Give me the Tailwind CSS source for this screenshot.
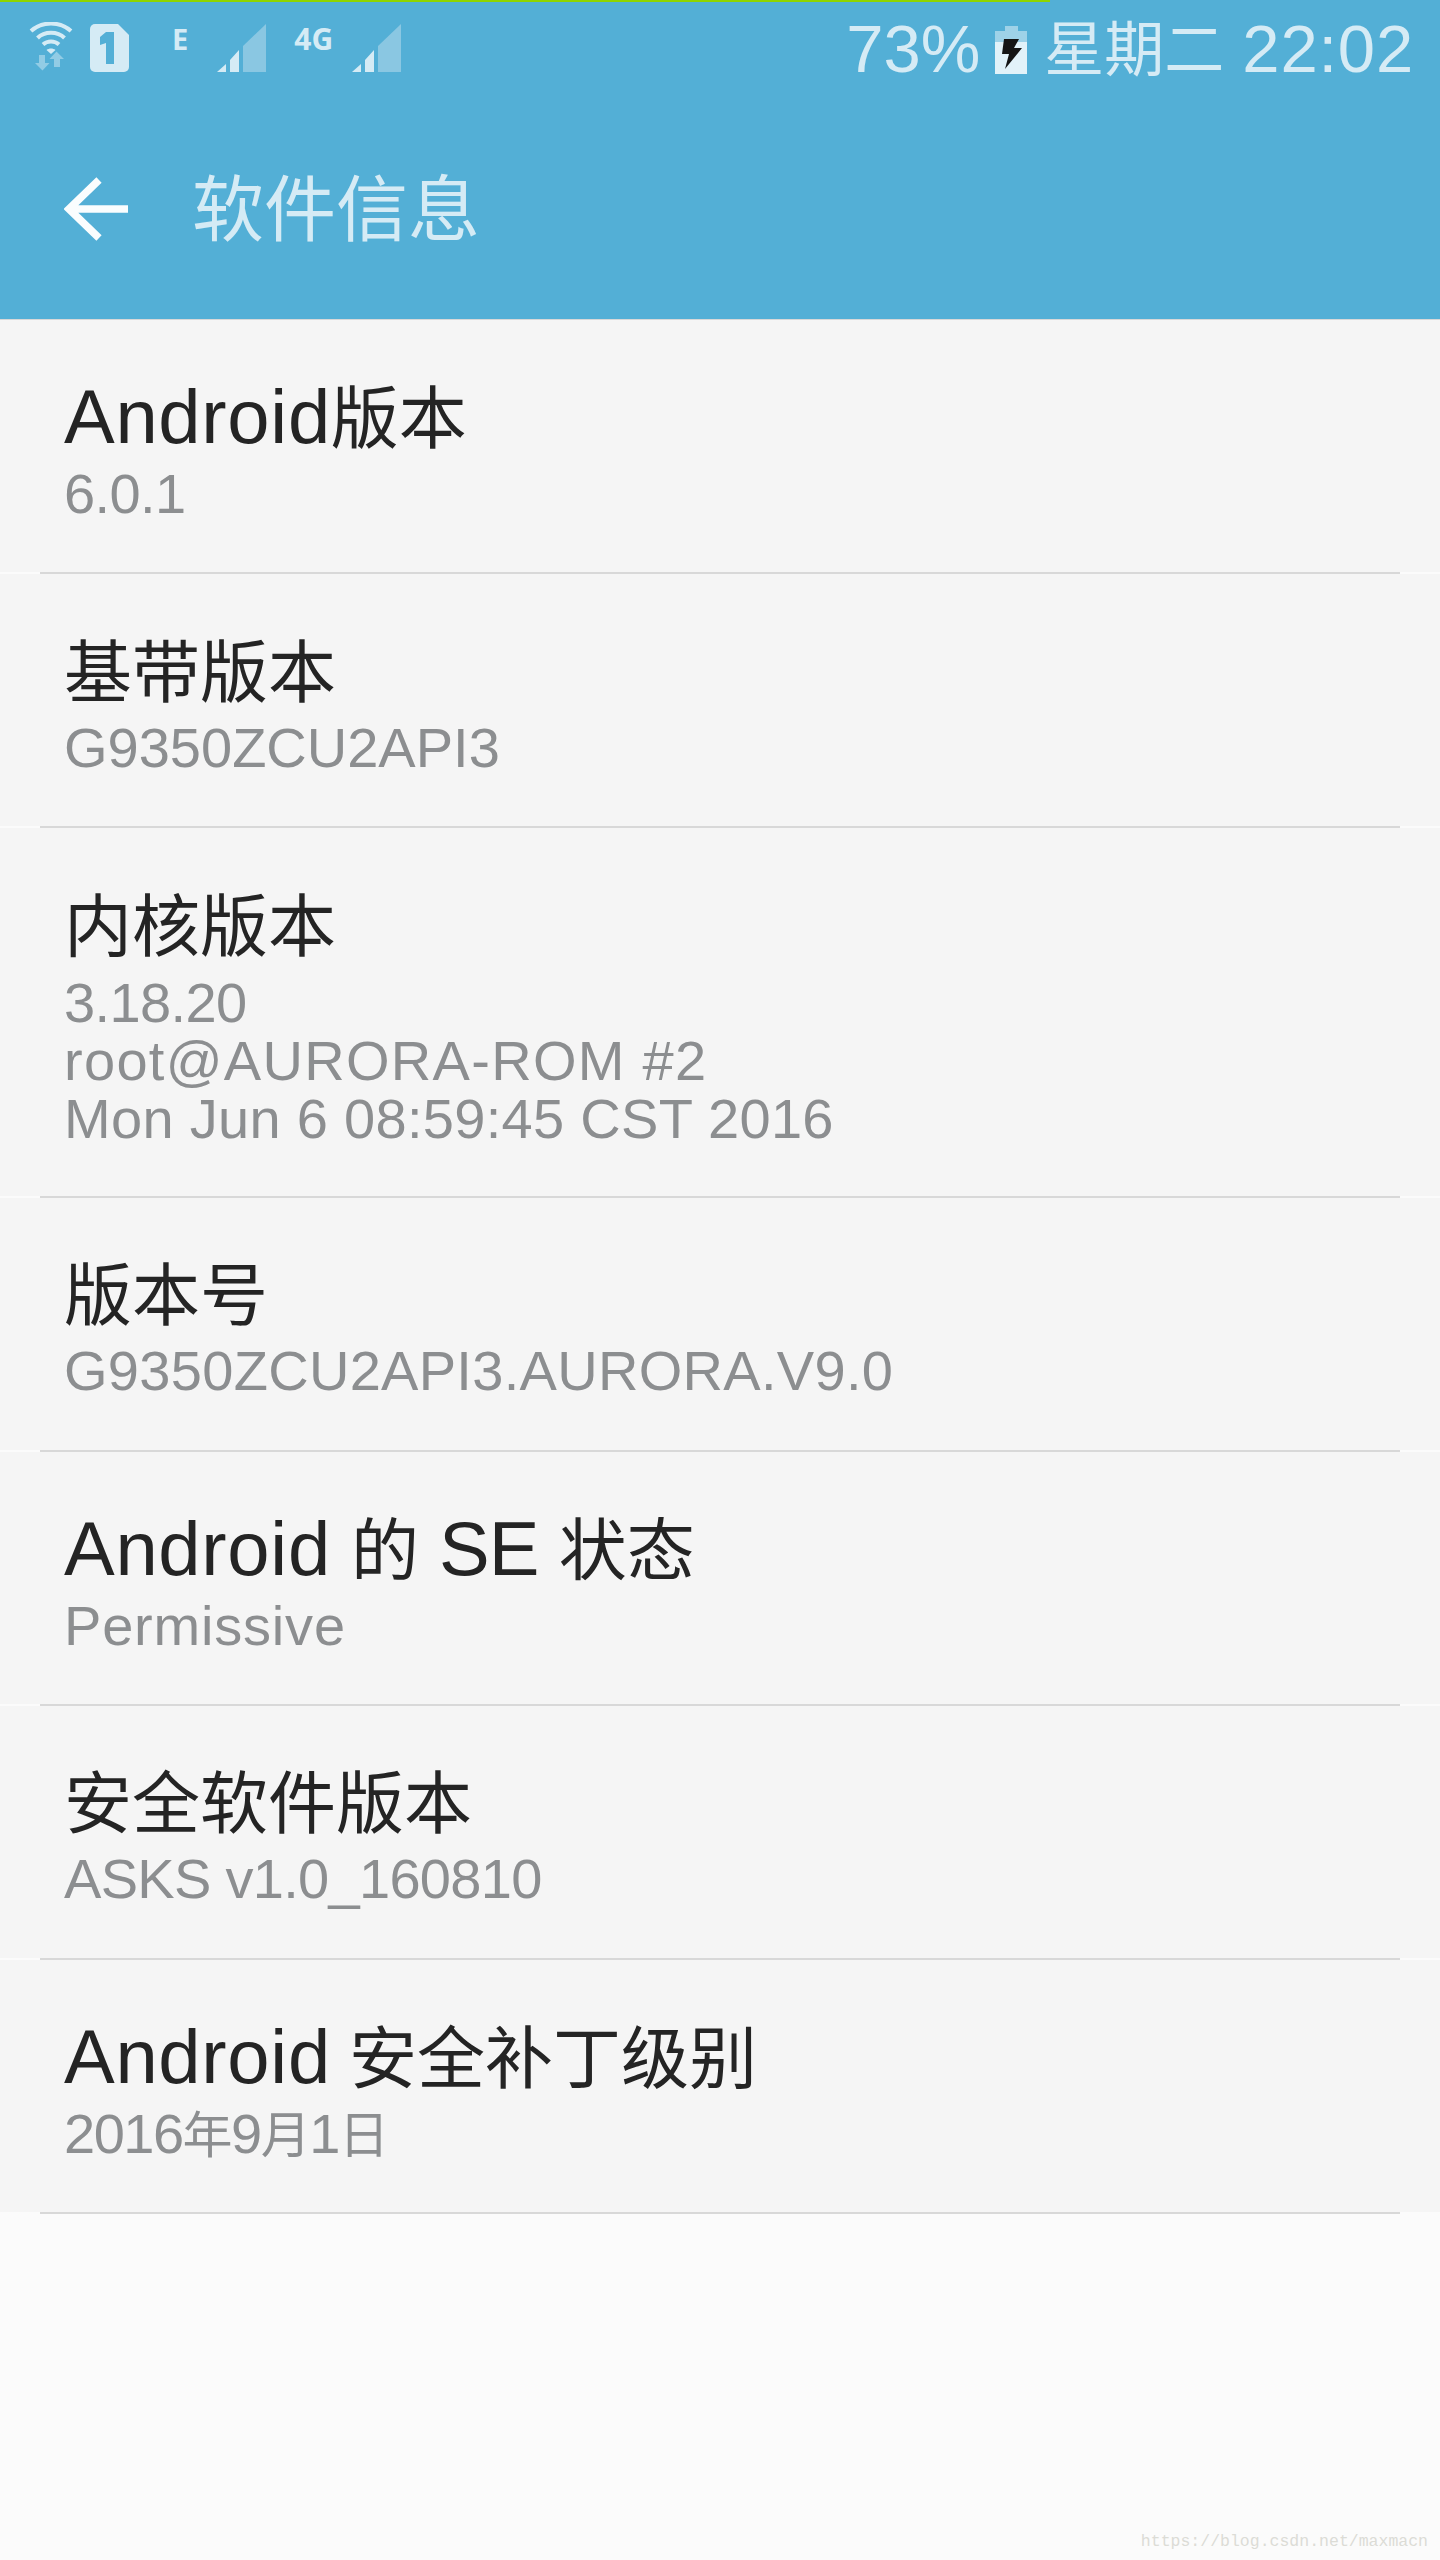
<!DOCTYPE html>
<html lang="zh-CN">
<head>
    <meta charset="UTF-8">
    <title>软件信息</title>
    <script src="https://cdn.jsdelivr.net/npm/@tailwindcss/browser@4"></script>
</head>
<body class="bg-[#fbfbfb] font-['Liberation_Sans','Noto_Sans_CJK_SC',sans-serif]">
    <div class="relative w-[1440px] h-[2560px] overflow-hidden">
        <!-- header -->
        <div class="bg-[#53afd6] h-[320px] border-b border-[#d8d8d8]">
            <div class="w-[1050px] h-[2px] bg-[#8fd400]"></div>
            <div class="flex items-start justify-between h-[96px] pl-[29px] pr-[26px] text-[#d5ebf5]">
                <div class="flex items-start pt-[20px]">
                    <svg class="w-[44px] h-[50px]" viewBox="0 0 44 50">
                        <path d="M2 9C13-1 31-1 42 9M8.500 16C15.500 9 28.500 9 35.500 16M14 22.500C18.500 18.500 25.500 18.500 30 22.500" fill="none" stroke="#d5ebf5" stroke-width="4"/>
                        <path d="M17.500 28C20 26 24 26 26.500 28L22 32Z" fill="#d5ebf5"/>
                        <path d="M10 33h6v8h4.500l-7 7.500L6 41h4ZM25 45v-8h-4.500l7-7.500L35 37h-4v8Z" fill="#92cce5"/>
                    </svg>
                    <svg class="w-[39px] h-[48px] ml-[17px] mt-[2px]" viewBox="0 0 39 48">
                        <path d="M5 0H28L39 11V43A5 5 0 0 1 34 48H5A5 5 0 0 1 0 43V5A5 5 0 0 1 5 0Z" fill="#d5ebf5"/>
                        <path d="M16 8H24V40H16V19L10 21V13Z" fill="#53afd6"/>
                    </svg>
                    <span class="ml-[43px] mt-[2px] text-[29px] leading-[30px] font-bold font-['Noto_Sans']">E</span>
                    <svg class="w-[49px] h-[48px] ml-[29px] mt-[2px]" viewBox="0 0 49 48">
                        <path d="M0 48L9 40V48ZM13 36L22 26V48H13Z" fill="#d5ebf5"/>
                        <path d="M26 22L49 0V48H26Z" fill="#8ac7e2"/>
                    </svg>
                    <span class="ml-[28px] mt-[2px] text-[30px] leading-[30px] font-bold font-['Noto_Sans']">4G</span>
                    <svg class="w-[49px] h-[48px] ml-[19px] mt-[2px]" viewBox="0 0 49 48">
                        <path d="M0 48L9 40V48ZM13 36L22 26V48H13Z" fill="#d5ebf5"/>
                        <path d="M26 22L49 0V48H26Z" fill="#8ac7e2"/>
                    </svg>
                </div>
                <div class="flex items-start pt-[11px] text-[67px] leading-[72px]">
                    <span>73%</span>
                    <svg class="w-[32px] h-[48px] ml-[15px] mt-[13px]" viewBox="0 0 32 48">
                        <path d="M10 0H23V5H32V16H0V5H10Z" fill="#9ed2e8"/>
                        <path d="M0 16H32V48H0Z" fill="#e2f2f9"/>
                        <path d="M9 13H24L19 22H27L10 43L14 28H7Z" fill="#151515"/>
                    </svg>
                    <span class="ml-[17px] text-[60px] mt-[2px]">星期二</span>
                    <span class="ml-[18px] tracking-[0.8px]">22:02</span>
                </div>
            </div>
            <div class="flex items-center h-[222px] pl-[64px]">
                <svg class="w-[64px] h-[64px]" viewBox="0 0 64 64">
                    <path d="M64 32H5M35 3L5 32L35 61" fill="none" stroke="#fafdfe" stroke-width="7.500"/>
                </svg>
                <span class="ml-[64px] mt-[2px] text-[72px] leading-[80px] text-[#d5ebf5]">软件信息</span>
            </div>
        </div>
        <!-- list -->
        <div class="bg-[#f5f5f5]">
            <div class="h-[252px] pt-[51px] pl-[64px]">
                <div class="text-[76px] leading-[91px] tracking-[0.7px] text-[#242424]">Android<span class="text-[68px] tracking-normal">版本</span></div>
                <div class="text-[56px] leading-[58px] tracking-[-0.6px] text-[#8c8e90]">6.0.1</div>
            </div>
            <div class="h-[2px] px-[40px] bg-[#fbfbfb]"><div class="h-full bg-[#d8d8d8]"></div></div>
            <div class="h-[252px] pt-[53px] pl-[64px]">
                <div class="text-[68px] leading-[92px] text-[#242424]">基带版本</div>
                <div class="text-[56px] leading-[58px] text-[#8c8e90]">G9350ZCU2API3</div>
            </div>
            <div class="h-[2px] px-[40px] bg-[#fbfbfb]"><div class="h-full bg-[#d8d8d8]"></div></div>
            <div class="h-[368px] pt-[53px] pl-[64px]">
                <div class="text-[68px] leading-[93px] text-[#242424]">内核版本</div>
                <div class="text-[56px] leading-[58px] text-[#8c8e90]">
                    <div class="tracking-[-0.6px]">3.18.20</div>
                    <div class="tracking-[1.300px]">root@AURORA-ROM #2</div>
                    <div class="tracking-[0.300px]">Mon Jun 6 08:59:45 CST 2016</div>
                </div>
            </div>
            <div class="h-[2px] px-[40px] bg-[#fbfbfb]"><div class="h-full bg-[#d8d8d8]"></div></div>
            <div class="h-[252px] pt-[53px] pl-[64px]">
                <div class="text-[68px] leading-[91px] text-[#242424]">版本号</div>
                <div class="text-[56px] leading-[58px] tracking-[0.300px] text-[#8c8e90]">G9350ZCU2API3.AURORA.V9.0</div>
            </div>
            <div class="h-[2px] px-[40px] bg-[#fbfbfb]"><div class="h-full bg-[#d8d8d8]"></div></div>
            <div class="h-[252px] pt-[51px] pl-[64px]">
                <div class="text-[76px] leading-[91px] tracking-[-1px] text-[#242424]"><span class="tracking-[0.7px]">Android</span> <span class="text-[68px] tracking-normal">的</span> SE <span class="text-[68px] tracking-normal">状态</span></div>
                <div class="text-[56px] leading-[58px] tracking-[0.800px] text-[#8c8e90]">Permissive</div>
            </div>
            <div class="h-[2px] px-[40px] bg-[#fbfbfb]"><div class="h-full bg-[#d8d8d8]"></div></div>
            <div class="h-[252px] pt-[53px] pl-[64px]">
                <div class="text-[68px] leading-[91px] text-[#242424]">安全软件版本</div>
                <div class="text-[56px] leading-[58px] tracking-[-0.700px] text-[#8c8e90]">ASKS v1.0_160810</div>
            </div>
            <div class="h-[2px] px-[40px] bg-[#fbfbfb]"><div class="h-full bg-[#d8d8d8]"></div></div>
            <div class="h-[252px] pt-[51px] pl-[64px]">
                <div class="text-[76px] leading-[91px] tracking-[-3px] text-[#242424]"><span class="tracking-[0.7px]">Android</span> <span class="text-[68px] tracking-normal">安全补丁级别</span></div>
                <div class="text-[56px] leading-[58px] tracking-[-1.500px] text-[#8c8e90]">2016<span class="text-[50px]">年</span>9<span class="text-[50px]">月</span>1<span class="text-[50px]">日</span></div>
            </div>
        </div>
        <div class="h-[2px] ml-[40px] w-[1360px] bg-[#d8d8d8]"></div>
        <!-- watermark -->
        <div class="absolute right-[12px] bottom-[8px] text-[16.500px] leading-[20px] text-[#dcdcd6] font-['Liberation_Mono','Noto_Sans_CJK_SC',monospace]">https://blog.csdn.net/maxmacn</div>
    </div>
</body>
</html>
